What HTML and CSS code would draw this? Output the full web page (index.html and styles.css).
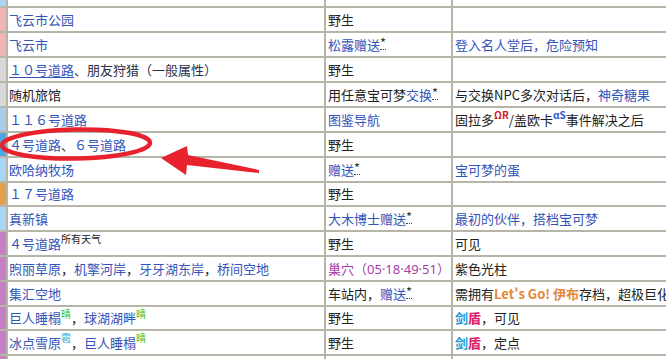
FILE: index.html
```html
<!DOCTYPE html>
<html lang="zh-CN">
<head>
<meta charset="utf-8">
<title>地点列表</title>
<link rel="stylesheet" href="styles.css">
</head>
<body>
<div class="page">
  <div class="tbl">
    <div class="row h6"><div class="strip s-lb"></div><div class="c1"></div><div class="c2"></div><div class="c3"></div></div>
    <div class="row"><div class="strip s-pink"></div><div class="c1"><a>飞云市公园</a></div><div class="c2">野生</div><div class="c3"></div></div>
    <div class="row"><div class="strip s-pink"></div><div class="c1"><a>飞云市</a></div><div class="c2"><a>松露赠送</a><span class="ast">*</span></div><div class="c3"><a>登入名人堂后，危险预知</a></div></div>
    <div class="row"><div class="strip s-grey"></div><div class="c1"><a class="ul">１０号道路</a><span class="dk">、朋友狩猎（一般属性）</span></div><div class="c2">野生</div><div class="c3"></div></div>
    <div class="row"><div class="strip s-grey"></div><div class="c1">随机旅馆</div><div class="c2">用任意宝可梦<a>交换</a><span class="ast">*</span></div><div class="c3">与交换NPC多次对话后，<a>神奇糖果</a></div></div>
    <div class="row"><div class="strip s-lg"></div><div class="c1"><a>１１６号道路</a></div><div class="c2"><a>图鉴导航</a></div><div class="c3">固拉多<sup class="red">ΩR</sup>/盖欧卡<sup class="blue">αS</sup>事件解决之后</div></div>
    <div class="row"><div class="strip s-blue"></div><div class="c1"><a>４号道路</a>、<a>６号道路</a></div><div class="c2">野生</div><div class="c3"></div></div>
    <div class="row"><div class="strip s-lb"></div><div class="c1"><a>欧哈纳牧场</a></div><div class="c2"><a>赠送</a><span class="ast">*</span></div><div class="c3"><a>宝可梦的蛋</a></div></div>
    <div class="row h22"><div class="strip s-orange"></div><div class="c1"><a>１７号道路</a></div><div class="c2">野生</div><div class="c3"></div></div>
    <div class="row"><div class="strip s-lb"></div><div class="c1"><a>真新镇</a></div><div class="c2"><a>大木博士赠送</a><span class="ast">*</span></div><div class="c3"><a>最初的伙伴，搭档宝可梦</a></div></div>
    <div class="row"><div class="strip s-purple"></div><div class="c1"><a>４号道路</a><sup class="wx">所有天气</sup></div><div class="c2">野生</div><div class="c3">可见</div></div>
    <div class="row"><div class="strip s-purple"></div><div class="c1"><a>煦丽草原</a>，<a>机擎河岸</a>，<a>牙牙湖东岸</a>，<a>桥间空地</a></div><div class="c2"><span class="den">巢穴（<span class="num">05·18·49·51</span>）</span></div><div class="c3">紫色光柱</div></div>
    <div class="row"><div class="strip s-purple"></div><div class="c1"><a>集汇空地</a></div><div class="c2">车站内，<a>赠送</a><span class="ast">*</span></div><div class="c3">需拥有<b class="lg">Let's Go! 伊布</b>存档，超极巨化</div></div>
    <div class="row h22"><div class="strip s-purple"></div><div class="c1"><a>巨人睡榻</a><sup class="sun">晴</sup>，<a>球湖湖畔</a><sup class="sun">晴</sup></div><div class="c2">野生</div><div class="c3"><b class="sw">剑</b><b class="sh">盾</b>，可见</div></div>
    <div class="row"><div class="strip s-purple"></div><div class="c1"><a>冰点雪原</a><sup class="hail">雹</sup>，<a>巨人睡榻</a><sup class="sun">晴</sup></div><div class="c2">野生</div><div class="c3"><b class="sw">剑</b><b class="sh">盾</b>，定点</div></div>
    <div class="row"><div class="strip s-purple"></div><div class="c1"></div><div class="c2"></div><div class="c3"></div></div>
  </div>
  <svg class="mark" width="666" height="359" viewBox="0 0 666 359">
    <ellipse cx="76" cy="144" rx="74" ry="14.5" transform="rotate(-1 76 144)" fill="none" stroke="#e8222c" stroke-width="4.5"/>
    <polygon points="161,158 187,146 188,155 259,170 259,173 187,165 186,175" fill="#e8222c"/>
  </svg>
</div>
</body>
</html>
```

FILE: styles.css
```css
html, body {
  margin: 0;
  padding: 0;
  background: #ffffff;
  overflow: hidden;
}
.page {
  position: relative;
  width: 666px;
  height: 359px;
  overflow: hidden;
}
.tbl {
  display: flex;
  flex-direction: column;
  gap: 2px;
  background: #b6b6a8;
  width: 780px;
  font-family: "Noto Sans CJK SC", "Noto Sans", sans-serif;
  font-size: 13px;
  color: #222222;
}
.row {
  display: grid;
  grid-template-columns: 6px 316px 125px 329px;
  column-gap: 2px;
  height: 23px;
}
.row.h6 { height: 6px; }
.row.h22 { height: 22px; }
.row > div {
  background: #ffffff;
  display: flex;
  align-items: center;
  white-space: nowrap;
  line-height: 18px;
}
.c1 { padding-left: 1px; }
.c2, .c3 { padding-left: 2px; }
.strip.s-lb { background: #a6d6f4; }
.strip.s-lg { background: #a9cde6; }
.strip.s-blue { background: #4ea6e6; }
.strip.s-pink { background: #f0b6b6; }
.strip.s-grey { background: #d8d8d8; }
.strip.s-orange { background: #e59f4c; border-radius: 0 4px 4px 0; }
.strip.s-purple { background: #c77fc6; }
a { color: #3354b8; text-decoration: none; }
a.ul { text-decoration: underline; text-underline-offset: 2px; }
.dk { color: #2a2f4a; }
.ast {
  color: #333333;
  line-height: 12px;
  border-bottom: 1px dotted #444444;
  align-self: center;
  margin-top: -2px;
}
sup {
  font-size: 10px;
  line-height: 11px;
  align-self: flex-start;
  margin-top: 1px;
}
sup.red { color: #d0202a; font-weight: bold; }
sup.blue { color: #2a5cd6; font-weight: bold; }
sup.wx { color: #222222; }
sup.sun { color: #3bbb1c; }
sup.hail { color: #35a8dc; }
.den { color: #a63ea8; }
.num { font-family: "Noto Sans", "Noto Sans CJK SC", sans-serif; }
b.lg { color: #e0893a; font-weight: bold; }
b.sw { color: #1c9ad8; font-weight: bold; }
b.sh { color: #d8206a; font-weight: bold; }
.mark {
  position: absolute;
  left: 0;
  top: 0;
  pointer-events: none;
}
```
